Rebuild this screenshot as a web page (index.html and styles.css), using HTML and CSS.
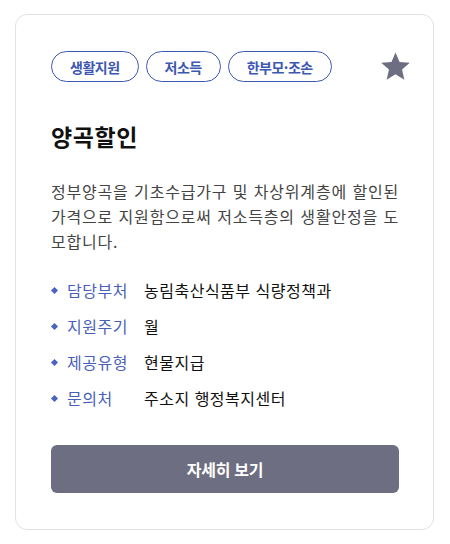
FILE: index.html
```html
<!DOCTYPE html>
<html lang="ko">
<head>
<meta charset="utf-8">
<link rel="stylesheet" href="styles.css">
</head>
<body>
<div class="card">
  <div class="top">
    <div class="tags">
      <span class="tag">생활지원</span>
      <span class="tag">저소득</span>
      <span class="tag">한부모·조손</span>
    </div>
    <svg class="star" width="33" height="33" viewBox="0 0 24 24"><path d="M12 1.8l2.95 6.9 7.45.65-5.65 4.9 1.7 7.3L12 17.7l-6.45 3.85 1.7-7.3L1.6 9.35l7.45-.65z" fill="#6e6e82"/></svg>
  </div>
  <h2 class="title">양곡할인</h2>
  <p class="desc">정부양곡을 기초수급가구 및 차상위계층에 할인된 가격으로 지원함으로써 저소득층의 생활안정을 도모합니다.</p>
  <ul class="info">
    <li><span class="label">담당부처</span><span class="value">농림축산식품부 식량정책과</span></li>
    <li><span class="label">지원주기</span><span class="value">월</span></li>
    <li><span class="label">제공유형</span><span class="value">현물지급</span></li>
    <li><span class="label">문의처</span><span class="value">주소지 행정복지센터</span></li>
  </ul>
  <button class="btn">자세히 보기</button>
</div>
</body>
</html>
```
FILE: styles.css
```css
* { box-sizing: border-box; }
body {
  margin: 0;
  padding: 14px 16px 15px 15px;
  background: #fff;
  font-family: "Noto Sans CJK KR", "Noto Sans", sans-serif;
}
.card {
  border: 1px solid #e2e2e6;
  border-radius: 12px;
  padding: 35px 34px 36px 35px;
  display: flex;
  flex-direction: column;
}
.top {
  display: flex;
  align-items: center;
  justify-content: space-between;
}
.tags {
  display: flex;
  gap: 7px;
}
.tag {
  border: 1px solid #3d58b0;
  border-radius: 16px;
  height: 31px;
  padding: 0 18px;
  display: flex;
  align-items: center;
  color: #3d58b0;
  font-size: 14px;
  font-weight: 700;
  letter-spacing: -0.5px;
}
.star {
  margin-right: -13px;
}
.title {
  margin: 37px 0 0;
  font-size: 23px;
  font-weight: 700;
  color: #111;
  line-height: 32px;
  letter-spacing: 0.6px;
}
.desc {
  margin: 27px 0 0;
  font-size: 16px;
  line-height: 25px;
  color: #444;
  text-align: justify;
  letter-spacing: 0.8px;
}
.info {
  list-style: none;
  margin: 24px 0 0;
  padding: 0;
  display: flex;
  flex-direction: column;
  gap: 12px;
}
.info li {
  display: flex;
  align-items: center;
  font-size: 16px;
  line-height: 24px;
  letter-spacing: 0.5px;
}
.info li::before {
  content: "";
  width: 5px;
  height: 5px;
  background: #4a62c0;
  transform: rotate(45deg);
  margin: 0 10px 0 1px;
}
.label {
  width: 77px;
  color: #4a5fb8;
}
.value {
  color: #111;
}
.btn {
  margin-top: 35px;
  height: 48px;
  border: none;
  border-radius: 6px;
  background: #6e6e82;
  color: #fff;
  font-family: inherit;
  font-size: 16px;
  font-weight: 700;
  letter-spacing: -0.3px;
}
```
